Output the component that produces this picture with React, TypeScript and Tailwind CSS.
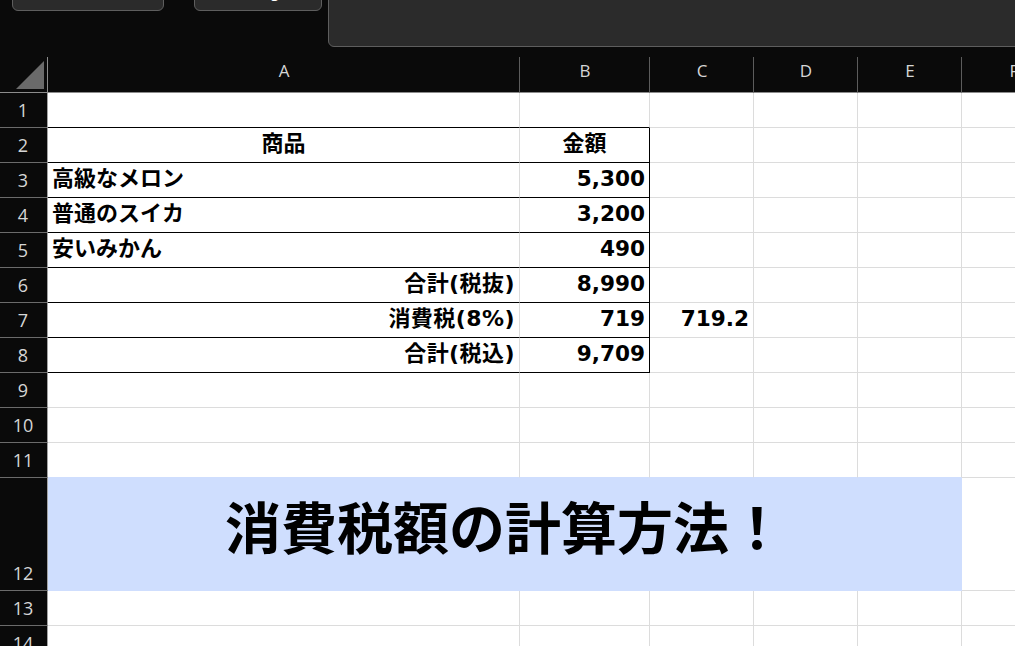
import React from "react";

type CellProps = {
  text?: string;
  align?: "left" | "right" | "center";
  rightBlack?: boolean;
  bottomBlack?: boolean;
  bottomBlue?: boolean;
  num?: boolean;
  wide?: boolean;
};

function clsxLocal(...parts: Array<string | false | undefined>) {
  return parts.filter(Boolean).join(" ");
}

function Cell({ text, align = "left", rightBlack, bottomBlack, bottomBlue, num, wide }: CellProps) {
  return (
    <div
      className={clsxLocal(
        "flex items-center overflow-visible whitespace-nowrap border-r border-b bg-white px-1 font-bold leading-none text-black",
        num ? "pb-[2px] text-[21.6px]" : "pb-[3px] text-[22px]",
        wide && "tracking-[0.45px]",
        align === "left" && "justify-start",
        align === "right" && "justify-end",
        align === "center" && "justify-center",
        rightBlack ? "border-r-black" : "border-r-[#dcdcdc]",
        bottomBlack ? "border-b-black" : bottomBlue ? "border-b-[#cfdefe]" : "border-b-[#dcdcdc]"
      )}
    >
      {text}
    </div>
  );
}

function RowHead({ n, bottom }: { n: number; bottom?: boolean }) {
  return (
    <div
      className={clsxLocal(
        "flex justify-center border-r border-b border-r-[#a3a3a3] border-b-[#6b6b6b] pr-[1px] font-['Open_Sans',sans-serif] text-[18px] leading-none text-[#d6d6d6]",
        bottom ? "items-end pb-[8px]" : "items-center pb-[1px]"
      )}
    >
      {n}
    </div>
  );
}

function ColHead({ label }: { label: string }) {
  return (
    <div className="flex items-center justify-center border-r border-b border-r-[#5c5c5c] border-b-[#8c8c8c] pb-[9px] pl-[1px] font-['Open_Sans',sans-serif] text-[17px] leading-none text-[#d6d6d6]">
      {label}
    </div>
  );
}

const tableRows: Array<{ n: number; a: string; aAlign: "left" | "right" | "center"; b: string; bAlign: "right" | "center"; c?: string }> = [
  { n: 2, a: "商品", aAlign: "center", b: "金額", bAlign: "center" },
  { n: 3, a: "高級なメロン", aAlign: "left", b: "5,300", bAlign: "right" },
  { n: 4, a: "普通のスイカ", aAlign: "left", b: "3,200", bAlign: "right" },
  { n: 5, a: "安いみかん", aAlign: "left", b: "490", bAlign: "right" },
  { n: 6, a: "合計(税抜)", aAlign: "right", b: "8,990", bAlign: "right" },
  { n: 7, a: "消費税(8%)", aAlign: "right", b: "719", bAlign: "right", c: "719.2" },
  { n: 8, a: "合計(税込)", aAlign: "right", b: "9,709", bAlign: "right" },
];

function EmptyRow({ n, black, blue }: { n: number; black?: boolean; blue?: boolean }) {
  return (
    <>
      <RowHead n={n} />
      <Cell bottomBlack={black} bottomBlue={blue} />
      <Cell bottomBlack={black} bottomBlue={blue} />
      <Cell bottomBlue={blue} />
      <Cell bottomBlue={blue} />
      <Cell bottomBlue={blue} />
      <Cell />
    </>
  );
}

export default function App() {
  return (
    <div className="h-[646px] w-[1015px] overflow-hidden bg-[#0a0a0a] font-['DejaVu_Sans','Noto_Sans_CJK_JP',sans-serif]">
      <div className="flex h-[57px] items-start overflow-hidden">
        <div className="ml-[12px] mt-[-30px] flex h-[41px] w-[152px] shrink-0 items-end rounded-b-[6px] border border-[#5e5e5e] bg-[#2b2b2b] pb-[9px] pl-[7px] text-[18px] leading-none text-white">
          A12
        </div>
        <div className="ml-[30px] mt-[-30px] flex h-[41px] w-[128px] shrink-0 items-end justify-end rounded-b-[6px] border border-[#5e5e5e] bg-[#2b2b2b] pb-[9px] pr-[41px] text-[16px] leading-none text-white">
          g
        </div>
        <div className="ml-[6px] mt-[-10px] h-[57px] w-[700px] shrink-0 rounded-b-[6px] border border-[#5e5e5e] bg-[#2b2b2b]" />
      </div>

      <div className="grid grid-cols-[48px_472px_130px_104px_104px_104px_104px] grid-rows-[36px_repeat(11,35px)_113px_35px_35px]">
        <div className="border-r border-b border-r-[#8c8c8c] border-b-[#8c8c8c]">
          <svg viewBox="0 0 47 35" className="h-[35px] w-[47px]">
            <polygon points="16,32 44,4 44,32" fill="#6a6a6a" />
          </svg>
        </div>
        {["A", "B", "C", "D", "E", "F"].map((l) => (
          <ColHead key={l} label={l} />
        ))}

        <EmptyRow n={1} black />

        {tableRows.map((r) => (
          <React.Fragment key={r.n}>
            <RowHead n={r.n} />
            <Cell text={r.a} align={r.aAlign} bottomBlack wide={r.aAlign === "right"} />
            <Cell text={r.b} align={r.bAlign} bottomBlack rightBlack num={r.bAlign === "right"} />
            <Cell text={r.c} align="right" num />
            <Cell />
            <Cell />
            <Cell />
          </React.Fragment>
        ))}

        <EmptyRow n={9} />
        <EmptyRow n={10} />
        <EmptyRow n={11} blue />

        <RowHead n={12} bottom />
        <div className="col-span-5 flex items-center justify-center bg-[#cfdefe] pb-[9px] text-[56px] font-bold leading-none text-black">
          消費税額の計算方法！
        </div>
        <Cell />

        <EmptyRow n={13} />
        <EmptyRow n={14} />
      </div>
    </div>
  );
}
